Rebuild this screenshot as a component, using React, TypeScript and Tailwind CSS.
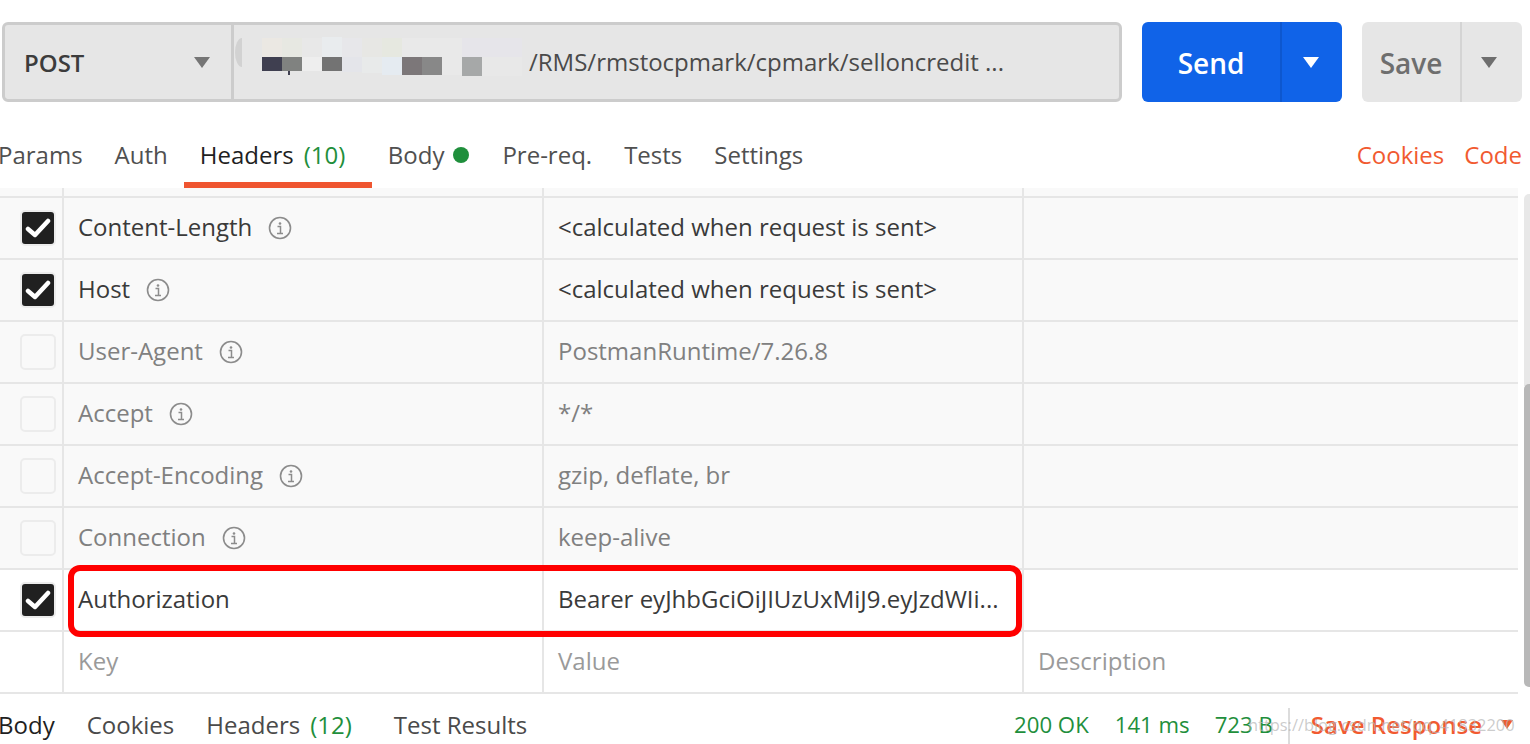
const rows = [
  { key: "Content-Length", value: "<calculated when request is sent>", on: true },
  { key: "Host", value: "<calculated when request is sent>", on: true },
  { key: "User-Agent", value: "PostmanRuntime/7.26.8", on: false },
  { key: "Accept", value: "*/*", on: false },
  { key: "Accept-Encoding", value: "gzip, deflate, br", on: false },
  { key: "Connection", value: "keep-alive", on: false },
];

function Caret({ className }: { className: string }) {
  return (
    <svg width="16" height="11" viewBox="0 0 16 11" className={className}>
      <path d="M0 0h16l-8 11z" fill="currentColor" />
    </svg>
  );
}

function Check({ on }: { on: boolean }) {
  if (!on) {
    return <div className="h-[36px] w-[36px] rounded-[5px] border-2 border-[#ececec]" />;
  }
  return (
    <div className="flex h-[36px] w-[36px] items-center justify-center rounded-[5px] border-2 border-[#ececec] bg-[#202020]">
      <svg width="26" height="22" viewBox="0 0 26 22">
        <path d="M3 12l7 6L23 4" fill="none" stroke="#fff" strokeWidth="4.5" strokeLinecap="round" strokeLinejoin="round" />
      </svg>
    </div>
  );
}

function Info() {
  return (
    <svg width="24" height="24" viewBox="0 0 24 24" className="mt-[2px] ml-[16px] text-[#8c8c8c]">
      <circle cx="12" cy="12" r="10.5" fill="none" stroke="currentColor" strokeWidth="1.6" />
      <circle cx="12" cy="7.5" r="1.3" fill="currentColor" />
      <path d="M9.5 10.5h3v6.5M9 17.5h6" fill="none" stroke="currentColor" strokeWidth="1.5" />
    </svg>
  );
}

type RowProps = {
  k: string
  value: string
  on: boolean
  info?: boolean
  active?: boolean
}

function Row({ k, value, on, info, active }: RowProps) {
  const keyColor = on ? "text-[#3a3a3a]" : "text-[#808080]";
  return (
    <div className={`flex h-[62px] border-b-2 border-[#e6e6e6] ${active ? "bg-white" : "bg-[#f9f9f9]"}`}>
      <div className="flex w-[64px] shrink-0 items-center justify-end border-r-2 border-[#e6e6e6] pr-[6px]">
        <Check on={on} />
      </div>
      <div className={`flex w-[480px] shrink-0 items-center border-r-2 border-[#e6e6e6] pb-[2px] pl-[14px] ${keyColor}`}>
        <span>{k}</span>
        {info && <Info />}
      </div>
      <div className={`flex w-[480px] shrink-0 items-center border-r-2 border-[#e6e6e6] pb-[2px] pl-[14px] ${keyColor}`}>
        <span className="truncate pr-[20px]">{value}</span>
      </div>
      <div className="flex-1" />
    </div>
  );
}

function Tab({ label, className }: { label: string; className?: string }) {
  return <div className={`flex items-center pt-[20px] text-[#505050] ${className ?? ""}`}>{label}</div>;
}

export default function App() {
  return (
    <div className="relative h-[744px] w-[1530px] overflow-hidden bg-white font-['Open_Sans','Noto_Sans',sans-serif] text-[24px] leading-normal text-[#4a4a4a]">
      <div className="flex items-stretch pt-[22px] pl-[2px]">
        <div className="flex h-[80px] w-[1120px] rounded-[6px] border-[3px] border-[#cccccc] bg-[#e6e6e6]">
          <div className="flex w-[229px] shrink-0 items-center justify-between border-r-[3px] border-[#cccccc] pr-[21px] pl-[19px]">
            <span className="pt-[2px] font-semibold text-[#3c3c3c]">POST</span>
            <Caret className="text-[#757575]" />
          </div>
          <div className="relative flex flex-1 items-center pl-[295px] text-[#4a4a4a]">
            <svg width="294" height="60" viewBox="0 0 294 60" className="absolute top-[5px] left-0">
              <path d="M8 8a7 14.5 0 0 0 0 29z" fill="#d2d2d2" />
              <rect x="28" y="8" width="20" height="19" fill="#ebe8e3" />
              <rect x="48" y="8" width="20" height="19" fill="#e7e8e2" />
              <rect x="68" y="8" width="20" height="19" fill="#e8e8e8" />
              <rect x="88" y="7" width="20" height="20" fill="#e9ecee" />
              <rect x="108" y="8" width="20" height="19" fill="#e7e7ea" />
              <rect x="128" y="8" width="20" height="19" fill="#e7e7e4" />
              <rect x="148" y="8" width="20" height="19" fill="#e6e8e0" />
              <rect x="168" y="8" width="60" height="19" fill="#e9e9e9" />
              <rect x="228" y="8" width="60" height="19" fill="#e6e5ea" />
              <rect x="28" y="27" width="20" height="14" fill="#3f3f50" />
              <rect x="48" y="27" width="20" height="14" fill="#808280" />
              <rect x="54" y="41" width="2" height="4" fill="#3f3f50" />
              <rect x="68" y="27" width="20" height="14" fill="#eeeeee" />
              <rect x="88" y="27" width="20" height="14" fill="#737373" />
              <rect x="108" y="27" width="20" height="15" fill="#e4e5ea" />
              <rect x="128" y="27" width="20" height="16" fill="#e8eaea" />
              <rect x="148" y="27" width="20" height="18" fill="#e5ebf1" />
              <rect x="168" y="27" width="20" height="18" fill="#7c7779" />
              <rect x="188" y="27" width="20" height="18" fill="#888888" />
              <rect x="208" y="27" width="20" height="18" fill="#e9e9e9" />
              <rect x="228" y="27" width="20" height="19" fill="#a6a8a8" />
              <rect x="248" y="27" width="40" height="19" fill="#e8e8e8" />
            </svg>
            <span className="relative">/RMS/rmstocpmark/cpmark/selloncredit ...</span>
          </div>
        </div>
        <div className="ml-[20px] flex h-[80px] w-[200px] rounded-[6px] bg-[#1063e8] text-white">
          <div className="flex w-[140px] items-center justify-center border-r-2 border-[#0d57cf] pt-[2px] text-[28px] font-semibold">Send</div>
          <div className="flex flex-1 items-center justify-center pr-[2px]">
            <Caret className="text-white" />
          </div>
        </div>
        <div className="ml-[20px] flex h-[80px] w-[160px] rounded-[6px] bg-[#e6e6e6] text-[#6e6e6e]">
          <div className="flex w-[100px] items-center justify-center border-r-2 border-[#d4d4d4] pt-[2px] text-[28px] font-semibold">Save</div>
          <div className="flex flex-1 items-center justify-center pr-[6px]">
            <Caret className="text-[#6e6e6e]" />
          </div>
        </div>
      </div>

      <div className="flex h-[86px]">
        <div className="-ml-[2px] flex h-full flex-1 items-stretch">
          <Tab label="Params" className="mr-[32px]" />
          <Tab label="Auth" className="mr-[16px]" />
          <div className="flex w-[188px] items-center border-b-[6px] border-[#ef5530] pt-[26px] pl-[16px] text-[#1f1f1f]">
            <span>Headers</span>
            <span className="ml-[10px] text-[#1f8f3c]">(10)</span>
          </div>
          <div className="ml-[16px] flex items-center pt-[20px] text-[#505050]">
            <span>Body</span>
            <span className="ml-[9px] h-[16px] w-[16px] rounded-full bg-[#1f8f3c]" />
          </div>
          <Tab label="Pre-req." className="ml-[33px]" />
          <Tab label="Tests" className="ml-[32px]" />
          <Tab label="Settings" className="ml-[32px]" />
        </div>
        <div className="flex items-center gap-[20px] pt-[20px] pr-[8px] text-[#f15a30]">
          <span>Cookies</span>
          <span>Code</span>
        </div>
      </div>

      <div className="w-[1518px]">
        <div className="flex h-[10px] border-b-2 border-[#e6e6e6] bg-[#f9f9f9]">
          <div className="w-[64px] border-r-2 border-[#e6e6e6]" />
          <div className="w-[480px] border-r-2 border-[#e6e6e6]" />
          <div className="w-[480px] border-r-2 border-[#e6e6e6]" />
        </div>
        {rows.map((r) => (
          <Row key={r.key} k={r.key} value={r.value} on={r.on} info />
        ))}
        <Row k="Authorization" value="Bearer eyJhbGciOiJIUzUxMiJ9.eyJzdWIi..." on active />
      </div>

      <div className="flex h-[62px] w-[1518px] border-b-2 border-[#e6e6e6] text-[#9a9a9a]">
        <div className="w-[64px] border-r-2 border-[#e6e6e6]" />
        <div className="flex w-[480px] items-center border-r-2 border-[#e6e6e6] pb-[2px] pl-[14px]">Key</div>
        <div className="flex w-[480px] items-center border-r-2 border-[#e6e6e6] pb-[2px] pl-[14px]">Value</div>
        <div className="flex items-center pb-[2px] pl-[14px]">Description</div>
      </div>

      <div className="flex h-[51px] items-center pt-[10px]">
        <span className="-ml-[2px] text-[#1f1f1f]">Body</span>
        <span className="ml-[32px]">Cookies</span>
        <span className="ml-[32px]">Headers</span>
        <span className="ml-[10px] text-[#1f8f3c]">(12)</span>
        <span className="ml-[42px]">Test Results</span>
        <div className="-mt-[10px] ml-auto flex h-[51px] items-center pt-[10px] text-[22.2px] text-[#1f8f3c]">
          <span>200 OK</span>
          <span className="ml-[26px]">141 ms</span>
          <span className="ml-[25px]">723 B</span>
          <div className="ml-[15px] h-[37px] self-end border-l-2 border-[#dcdcdc]" />
          <span className="ml-[21px] text-[24px] font-semibold text-[#f15a30]">Save Response</span>
          <svg width="12" height="9" viewBox="0 0 12 9" className="mr-[17px] ml-[19px] text-[#f15a30]">
            <path d="M0 0h12L6 9z" fill="currentColor" />
          </svg>
        </div>
      </div>

      {/* red highlight and scrollbar sit over the table */}
      <div className="absolute top-[565px] left-[68px] h-[72px] w-[954px] rounded-[12px] border-[6px] border-[#ff0000]" />
      <div className="absolute top-[194px] right-0 h-[192px] w-[6px] rounded-tl-[5px] bg-[#e8e8e8]" />
      <div className="absolute top-[384px] right-0 h-[303px] w-[6px] rounded-l-[5px] bg-[#b8b8b8]" />
      <div className="absolute top-[713px] left-[1248px] text-[16.4px] text-[#b5b5b5]/70">https://blog.csdn.net/qq_41832200</div>
    </div>
  );
}
